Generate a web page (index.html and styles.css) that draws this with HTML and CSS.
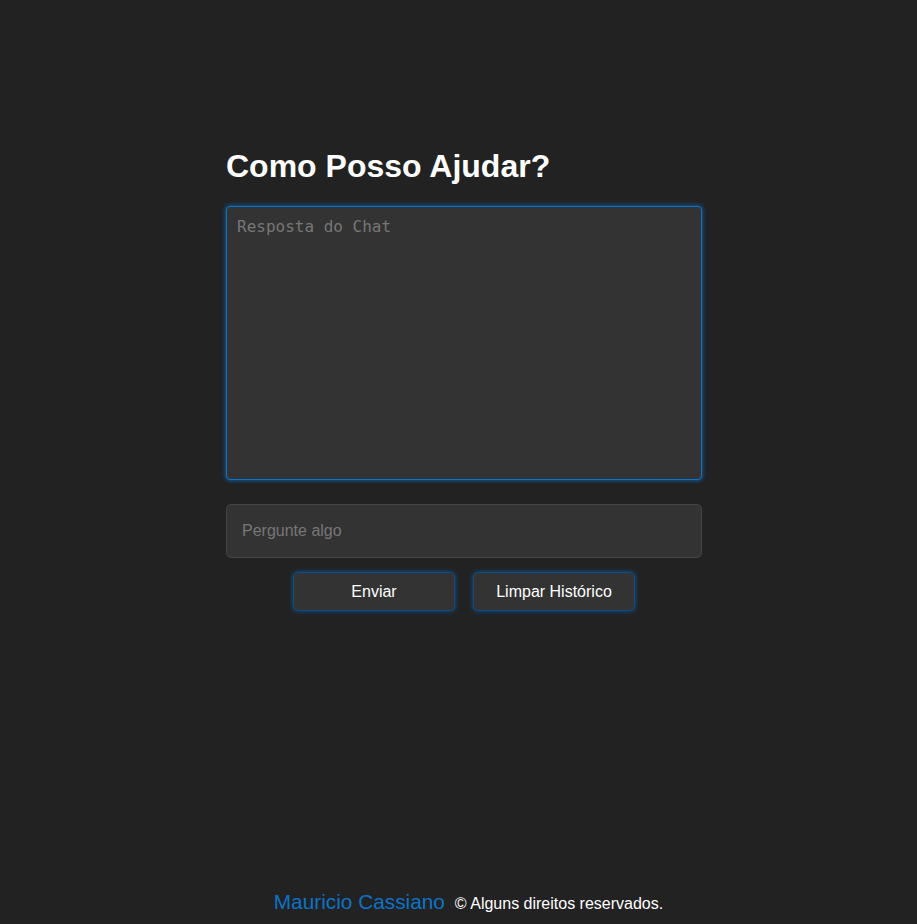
FILE: index.html
```html
<!DOCTYPE html>
<html lang="pt">
<head>
<meta charset="utf-8">
<title>Como Posso Ajudar?</title>
<link rel="stylesheet" href="styles.css">
</head>
<body>
<main class="page">
  <div class="chat">
    <h1 class="title">Como Posso Ajudar?</h1>
    <textarea class="response" placeholder="Resposta do Chat" readonly></textarea>
    <input class="question" type="text" placeholder="Pergunte algo">
    <div class="actions">
      <button class="btn">Enviar</button>
      <button class="btn">Limpar Histórico</button>
    </div>
  </div>
</main>
<footer class="footer">
  <a class="author" href="#">Mauricio Cassiano</a>
  <span class="rights">© Alguns direitos reservados.</span>
</footer>
</body>
</html>
```
FILE: styles.css
```css
html, body {
  margin: 0;
  padding: 0;
  height: 100%;
}
body {
  background: #222222;
  color: #ffffff;
  font-family: "Liberation Sans", Arial, sans-serif;
  display: flex;
  flex-direction: column;
  min-height: 924px;
}
.page {
  flex: 1;
  padding-top: 148px;
}
.chat {
  width: 476px;
  margin-left: 226px;
  display: flex;
  flex-direction: column;
}
.title {
  margin: 0 0 21px 0;
  font-size: 32px;
  font-weight: bold;
  line-height: 37px;
}
.response {
  box-sizing: border-box;
  width: 476px;
  height: 274px;
  background: #333333;
  border: 1px solid #0a74c9;
  border-radius: 4px;
  box-shadow: 0 0 5px #0a6ec0;
  padding: 10px 10px 9px;
  font-family: "DejaVu Sans Mono", monospace;
  font-size: 16px;
  color: #ffffff;
  resize: none;
  outline: none;
  margin: 0;
}
.response::placeholder {
  color: #777777;
}
.question {
  box-sizing: border-box;
  width: 476px;
  height: 54px;
  margin: 24px 0 0 0;
  background: #333333;
  border: 1px solid #444444;
  border-radius: 5px;
  padding: 0 15px;
  font-family: "Liberation Sans", Arial, sans-serif;
  font-size: 16px;
  color: #ffffff;
  outline: none;
}
.question::placeholder {
  color: #777777;
}
.actions {
  display: flex;
  justify-content: center;
  gap: 18px;
  margin-top: 14px;
}
.btn {
  width: 162px;
  height: 39px;
  background: #333333;
  border: 1px solid #0b4f86;
  border-radius: 5px;
  box-shadow: 0 0 5px #0a5a9c;
  color: #ffffff;
  font-family: "Liberation Sans", Arial, sans-serif;
  font-size: 16px;
  padding: 1px 0 0 0;
  cursor: pointer;
}
.footer {
  display: flex;
  justify-content: center;
  align-items: baseline;
  gap: 10px;
  padding: 0 0 10px 20px;
}
.author {
  color: #0a74c9;
  font-size: 20.8px;
  text-decoration: none;
}
.rights {
  font-size: 16px;
}
```
